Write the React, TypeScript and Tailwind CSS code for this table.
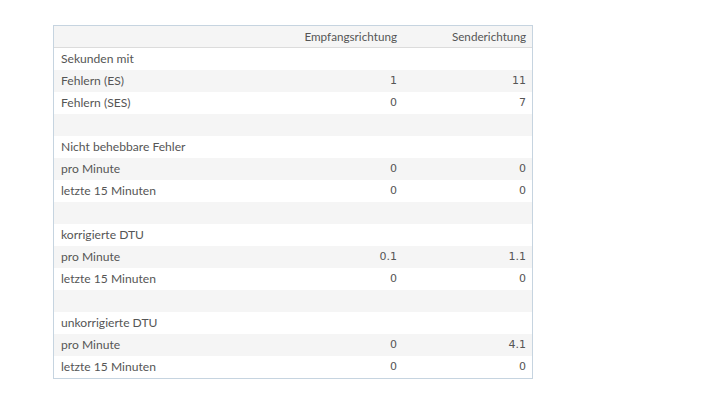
type Row = { label: string; rx?: string; tx?: string };

const rows: Row[] = [
  { label: "Sekunden mit" },
  { label: "Fehlern (ES)", rx: "1", tx: "11" },
  { label: "Fehlern (SES)", rx: "0", tx: "7" },
  { label: "" },
  { label: "Nicht behebbare Fehler" },
  { label: "pro Minute", rx: "0", tx: "0" },
  { label: "letzte 15 Minuten", rx: "0", tx: "0" },
  { label: "" },
  { label: "korrigierte DTU" },
  { label: "pro Minute", rx: "0.1", tx: "1.1" },
  { label: "letzte 15 Minuten", rx: "0", tx: "0" },
  { label: "" },
  { label: "unkorrigierte DTU" },
  { label: "pro Minute", rx: "0", tx: "4.1" },
  { label: "letzte 15 Minuten", rx: "0", tx: "0" },
];

export default function App() {
  return (
    <div className="w-[727px] h-[398px] bg-white pl-[53px] pt-[25px] text-[#555]">
      <div className="w-[480px] border border-[#c6d4e0]">
        <div className="flex h-[22px] items-center pt-[1px] bg-[#f5f5f5] border-b border-[#dcdcdc] text-[11.7px] font-['Lato',sans-serif]">
          <div className="w-[236px]" />
          <div className="w-[115px] pr-[8px] text-right">Empfangsrichtung</div>
          <div className="flex-1 pr-[6px] text-right">Senderichtung</div>
        </div>
        {rows.map((r, i) => (
          <div
            key={i}
            className={`flex h-[22px] items-center pt-[1px] ${i % 2 === 1 ? "bg-[#f5f5f5]" : "bg-white"}`}
          >
            <div className="w-[236px] pl-[7px] text-[12.1px] font-['Lato',sans-serif]">{r.label}</div>
            <div className="w-[115px] pr-[8px] text-right text-[11px] font-['DejaVu_Sans',sans-serif]">{r.rx}</div>
            <div className="flex-1 pr-[6px] text-right text-[11px] font-['DejaVu_Sans',sans-serif]">{r.tx}</div>
          </div>
        ))}
      </div>
    </div>
  );
}
